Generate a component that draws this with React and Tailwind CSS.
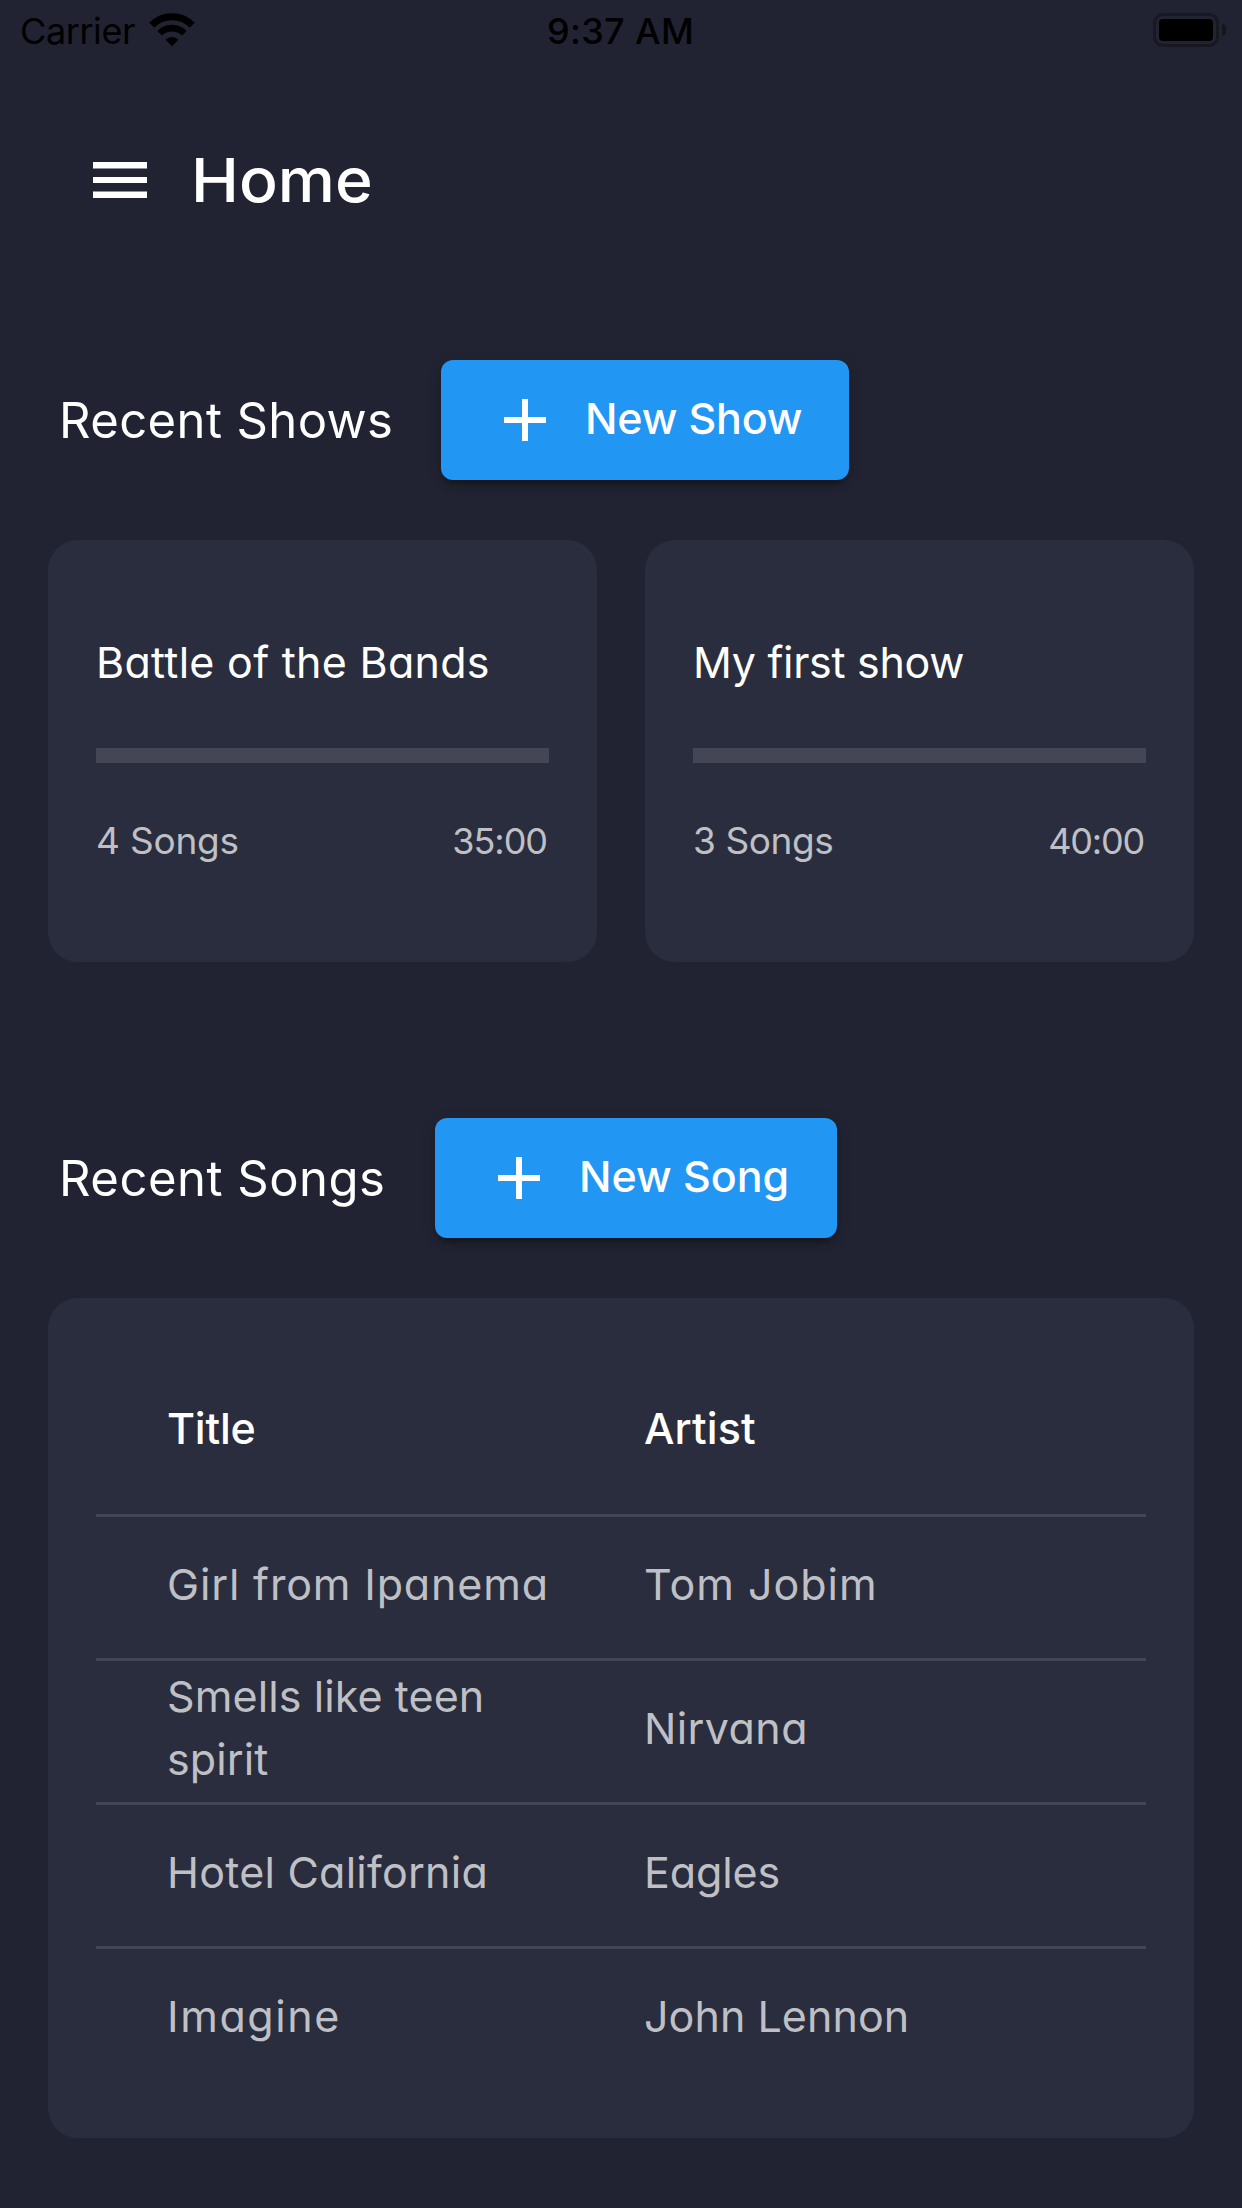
import React from "react";

const shows = [
  { title: "Battle of the Bands", titleTrack: "tracking-[0.28px]", songs: "4 Songs", songsTrack: "tracking-[-0.2px]", time: "35:00", timeTrack: "tracking-[-1.05px]" },
  { title: "My first show", titleTrack: "tracking-[-0.3px]", songs: "3 Songs", songsTrack: "tracking-[-0.4px]", time: "40:00", timeTrack: "tracking-[-1.19px]" },
];

const songs = [
  { title: ["Girl from Ipanema"], titleTrack: "tracking-[0.85px]", artist: "Tom Jobim", artistTrack: "tracking-[1px]" },
  { title: ["Smells like teen", "spirit"], titleTrack: "tracking-[0.1px]", artist: "Nirvana", artistTrack: "tracking-[0.4px]" },
  { title: ["Hotel California"], titleTrack: "tracking-[0.25px]", artist: "Eagles", artistTrack: "tracking-[-0.1px]" },
  { title: ["Imagine"], titleTrack: "tracking-[1.6px]", artist: "John Lennon", artistTrack: "tracking-[0.05px]" },
];

function WifiIcon() {
  return (
    <svg className="h-[34px] w-[46px]" viewBox="0 0 46 34" fill="none">
      <path d="M2.7 12.1 A28.6 28.6 0 0 1 43.3 12.1" stroke="#000" strokeWidth="7" />
      <path d="M10.7 20.3 A17.2 17.2 0 0 1 35.3 20.3" stroke="#000" strokeWidth="6.6" />
      <path d="M16.4 26.6 A9.8 9.8 0 0 1 29.6 26.6 L23 33.3 Z" fill="#000" />
    </svg>
  );
}

function BatteryIcon() {
  return (
    <svg className="h-[34px] w-[73px]" viewBox="0 0 73 34" fill="none">
      <rect x="1.5" y="1.5" width="63" height="31" rx="8.5" stroke="#171820" strokeWidth="3" />
      <rect x="6" y="6" width="54" height="22" rx="4" fill="#000" />
      <path d="M69 11 A6.2 6.2 0 0 1 69 23 Z" fill="#14151d" />
    </svg>
  );
}

function StatusBar() {
  return (
    <div className="grid h-[60px] grid-cols-3 items-center pr-4 pl-5 text-[36px] leading-[44px] text-black">
      <div className="flex items-center">
        <span className="pt-0.5 tracking-[-0.41px]">Carrier</span>
        <span className="ml-[14px]">
          <WifiIcon />
        </span>
      </div>
      <div className="pt-0.5 pr-[5px] text-center font-medium tracking-[0.36px]">9:37 AM</div>
      <div className="flex justify-end">
        <BatteryIcon />
      </div>
    </div>
  );
}

function MenuIcon() {
  return (
    <svg className="size-[72px]" viewBox="0 0 72 72" fill="#fff">
      <path d="M9 18h54v6.4H9zM9 33h54v6H9zM9 47.6h54V54H9z" />
    </svg>
  );
}

function PlusIcon() {
  return (
    <svg className="size-[72px]" viewBox="0 0 72 72" fill="#fff">
      <path d="M33 15h6v18h18v6H39v18h-6V39H15v-6h18z" />
    </svg>
  );
}

function SectionHeader({ title, titleClass, action, actionClass, buttonClass }) {
  return (
    <div className="flex h-[120px] items-center pl-[59px]">
      <h2 className={`shrink-0 pt-px text-[49px] leading-[72px] whitespace-nowrap ${titleClass}`}>{title}</h2>
      <button
        className={`flex h-[120px] items-center rounded-[12px] bg-[#2196f3] pl-12 font-medium shadow-[0_9px_3px_-6px_rgba(0,0,0,0.2),0_6px_6px_rgba(0,0,0,0.14),0_3px_15px_rgba(0,0,0,0.12)] ${buttonClass}`}
      >
        <PlusIcon />
        <span className={`ml-6 pb-[3px] text-[43px] leading-[63px] whitespace-nowrap ${actionClass}`}>{action}</span>
      </button>
    </div>
  );
}

function ShowCard({ show }) {
  return (
    <div className="h-[422px] rounded-[30px] bg-[#2a2d3e] px-12 pt-[91px]">
      <h3 className={`text-[43px] leading-[63px] whitespace-nowrap ${show.titleTrack}`}>{show.title}</h3>
      <div className="mt-[54px] h-[15px] bg-[#444655]" />
      <div className="mt-[51px] flex justify-between pr-[2px] text-[37px] leading-[54px] text-[#bfc0c5]">
        <span className={show.songsTrack}>{show.songs}</span>
        <span className={`text-[36px] ${show.timeTrack}`}>{show.time}</span>
      </div>
    </div>
  );
}

function SongTable() {
  return (
    <div className="mx-12 h-[840px] rounded-[30px] bg-[#2a2d3e] px-12 pt-12 text-[43px] leading-[63px]">
      <div className="grid h-[171px] grid-cols-[477px_1fr] items-center border-b-[3px] border-[#444655] pb-[4px] pl-[71px] font-medium">
        <span className="tracking-[-0.2px]">Title</span>
        <span className="tracking-[0.1px]">Artist</span>
      </div>
      {songs.map((song) => (
        <div
          key={song.artist}
          className="grid h-[144px] grid-cols-[477px_1fr] items-center border-b-[3px] border-[#444655] pb-[7px] pl-[71px] text-[#bfc0c5] last:border-transparent"
        >
          <div className={song.titleTrack}>
            {song.title.map((line) => (
              <div key={line}>{line}</div>
            ))}
          </div>
          <div className={song.artistTrack}>{song.artist}</div>
        </div>
      ))}
    </div>
  );
}

export default function App() {
  return (
    <div className="h-[2208px] w-[1242px] overflow-hidden bg-[#212332] font-['Inter','Noto_Sans',sans-serif] text-white">
      <StatusBar />
      <div className="[font-feature-settings:'cv11']">
        <header className="mt-[84px] flex h-[72px] items-center pl-[84px]">
          <MenuIcon />
          <h1 className="ml-[35px] origin-left scale-x-[1.055] pb-px text-[61px] leading-[72px] font-medium">Home</h1>
        </header>

        <section className="mt-36">
          <SectionHeader
            title="Recent Shows"
            titleClass="w-[382px] tracking-[0.4px]"
            action="New Show"
            actionClass="tracking-[-0.2px]"
            buttonClass="w-[408px]"
          />
          <div className="mx-12 mt-[60px] grid grid-cols-2 gap-12">
            {shows.map((show) => (
              <ShowCard key={show.title} show={show} />
            ))}
          </div>
        </section>

        <section className="mt-[156px]">
          <SectionHeader
            title="Recent Songs"
            titleClass="w-[376px] tracking-[0.5px]"
            action="New Song"
            actionClass="tracking-[-0.05px]"
            buttonClass="w-[402px]"
          />
          <div className="mt-[60px]">
            <SongTable />
          </div>
        </section>
      </div>
    </div>
  );
}
